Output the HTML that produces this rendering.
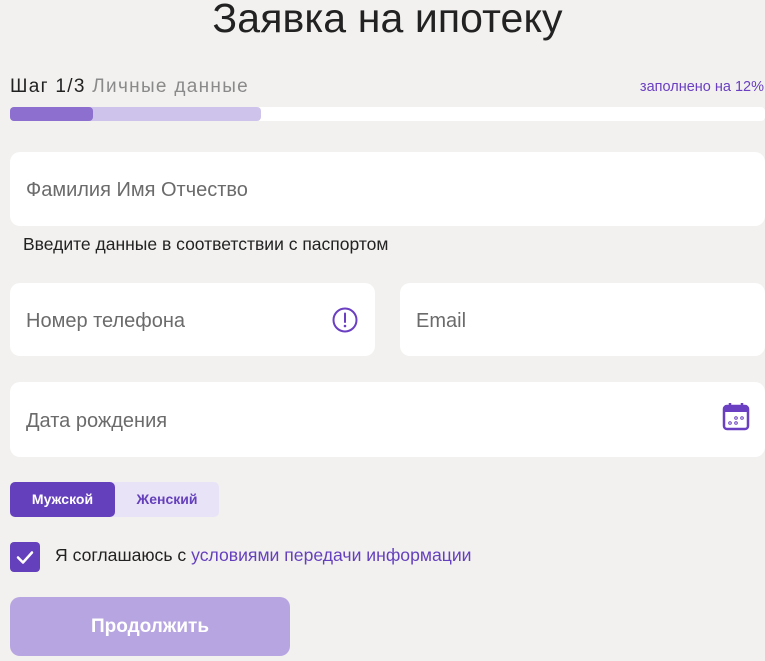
<!DOCTYPE html>
<html><head><meta charset="utf-8"><style>
*{margin:0;padding:0;box-sizing:border-box}
body{width:765px;height:661px;background:#f2f1ef;font-family:"Liberation Sans",sans-serif;position:relative;overflow:hidden;color:#222}
.a{position:absolute}
.f{position:absolute;background:#fff;border-radius:10px}
.ph{position:absolute;left:16px;font-size:20px;color:#6b6b6b}
</style></head><body>
<div class="a" style="left:0;width:775px;top:-5px;text-align:center;font-size:41px;color:#222;letter-spacing:0.1px">Заявка на ипотеку</div>
<div class="a" style="left:10px;top:76px;font-size:19px;color:#222;letter-spacing:1.3px">Шаг 1/3 <span style="color:#8a8a8a">Личные данные</span></div>
<div class="a" style="right:1px;top:79px;font-size:14.5px;color:#6a3fc1">заполнено на 12%</div>
<div class="a" style="left:10px;top:107px;width:755px;height:14px;background:#fff;border-radius:4px"></div>
<div class="a" style="left:10px;top:107px;width:251px;height:14px;background:#cec3eb;border-radius:4px"></div>
<div class="a" style="left:10px;top:107px;width:83px;height:14px;background:#8c6fce;border-radius:4px"></div>
<div class="f" style="left:10px;top:152px;width:755px;height:74px"><div class="ph" style="top:27px">Фамилия Имя Отчество</div></div>
<div class="a" style="left:23px;top:234px;font-size:17.5px;color:#222">Введите данные в соответствии с паспортом</div>
<div class="f" style="left:10px;top:283px;width:365px;height:73px"><div class="ph" style="top:27px">Номер телефона</div>
<svg class="a" style="left:322px;top:24px" width="26" height="26" viewBox="0 0 26 26"><circle cx="13" cy="13" r="11.5" fill="none" stroke="#6a3fc1" stroke-width="2"/><line x1="13" y1="6.5" x2="13" y2="15" stroke="#6a3fc1" stroke-width="2" stroke-linecap="round"/><circle cx="13" cy="19" r="1.3" fill="#6a3fc1"/></svg></div>
<div class="f" style="left:400px;top:283px;width:365px;height:73px"><div class="ph" style="top:27px">Email</div></div>
<div class="f" style="left:10px;top:382px;width:755px;height:75px"><div class="ph" style="top:28px">Дата рождения</div>
<svg class="a" style="left:712px;top:20px" width="28" height="30" viewBox="0 0 28 30"><rect x="2" y="4" width="24" height="23" rx="3" fill="none" stroke="#6a3fc1" stroke-width="2.5"/><rect x="2" y="4" width="24" height="6" fill="#6a3fc1"/><line x1="8" y1="1" x2="8" y2="6" stroke="#6a3fc1" stroke-width="2.5"/><line x1="20" y1="1" x2="20" y2="6" stroke="#6a3fc1" stroke-width="2.5"/><g fill="none" stroke="#6a3fc1" stroke-width="1"><circle cx="14" cy="16" r="1.3"/><circle cx="20" cy="16" r="1.3"/><circle cx="8" cy="21" r="1.3"/><circle cx="14" cy="21" r="1.3"/></g></svg></div>
<div class="a" style="left:10px;top:482px;width:209px;height:35px;background:#e9e3f7;border-radius:5px"></div>
<div class="a" style="left:10px;top:482px;width:105px;height:35px;background:#6540bd;border-radius:5px;color:#fff;font-weight:bold;font-size:14px;text-align:center;line-height:35px">Мужской</div>
<div class="a" style="left:115px;top:482px;width:104px;height:35px;color:#6540bd;font-weight:bold;font-size:14px;text-align:center;line-height:35px">Женский</div>
<div class="a" style="left:10px;top:542px;width:30px;height:30px;background:#6540bd;border-radius:4px"><svg width="30" height="30"><path d="M8 15.5l5 5 9-10" fill="none" stroke="#fff" stroke-width="2.5" stroke-linecap="round" stroke-linejoin="round"/></svg></div>
<div class="a" style="left:55px;top:545px;font-size:17.6px;color:#222">Я соглашаюсь с <span style="color:#6540bd">условиями передачи информации</span></div>
<div class="a" style="left:10px;top:597px;width:280px;height:59px;background:#b7a5e2;border-radius:10px;color:#fff;font-weight:bold;font-size:19px;text-align:center;line-height:59px">Продолжить</div>
</body></html>
